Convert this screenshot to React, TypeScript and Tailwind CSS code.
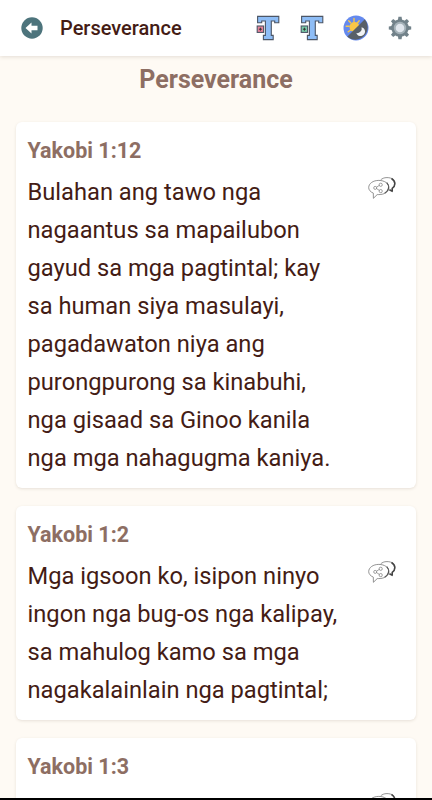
const verses = [
  {
    reference: "Yakobi 1:12",
    lines: [
      "Bulahan ang tawo nga",
      "nagaantus sa mapailubon",
      "gayud sa mga pagtintal; kay",
      "sa human siya masulayi,",
      "pagadawaton niya ang",
      "purongpurong sa kinabuhi,",
      "nga gisaad sa Ginoo kanila",
      "nga mga nahagugma kaniya.",
    ],
  },
  {
    reference: "Yakobi 1:2",
    lines: [
      "Mga igsoon ko, isipon ninyo",
      "ingon nga bug-os nga kalipay,",
      "sa mahulog kamo sa mga",
      "nagakalainlain nga pagtintal;",
    ],
  },
  { reference: "Yakobi 1:3", lines: [] },
];

function BackIcon() {
  return (
    <svg viewBox="0 0 22 22" className="h-[22px] w-[22px]">
      <circle cx="11" cy="11" r="10.7" fill="#4d747c" />
      <path d="M4.5 11l6-5.6v3.3h6v4.6h-6v3.3z" fill="#fff" />
    </svg>
  );
}

function FontSizeIcon({ color }: { color: string }) {
  return (
    <svg viewBox="0 0 24 26" className="h-[26px] w-6" stroke="#4c5666" strokeWidth="1.1">
      <path
        d="M1.6 1.4h21.2v6.4h-4.1V6h-3.4v14.4h1.9v4.2H7.4v-4.2h2V6H5.7v1.8H1.6z"
        fill="#8ebdf6"
      />
      <rect x="1.2" y="11" width="6.4" height="6.4" fill={color} />
      <path d="M4.4 12.7v3M2.9 14.2h3" stroke="#333" strokeWidth="1" />
    </svg>
  );
}

function ThemeIcon() {
  return (
    <svg viewBox="0 0 26 26" className="h-[26px] w-[26px]">
      <circle cx="13" cy="13" r="12.5" fill="#6489ee" />
      <path
        d="M11 3.5v3M5.7 5.8l2 2M3.2 11.2h3M16.2 5.8l-1.7 2M5.2 16.8l2.2-1.6"
        stroke="#f4c64d"
        strokeWidth="1.4"
        strokeLinecap="round"
      />
      <circle cx="11.5" cy="12" r="5" fill="#fac746" />
      <path d="M21.8 4.2A12.5 12.5 0 0 1 4.2 21.8z" fill="#596068" />
      <path d="M18.6 12.2a4.5 4.5 0 1 1-5.3 5.9 4.8 4.8 0 0 0 5.3-5.9z" fill="#f1f3f5" />
    </svg>
  );
}

function SettingsIcon() {
  const teeth = [0, 45, 90, 135, 180, 225, 270, 315];
  return (
    <svg viewBox="0 0 24 24" className="h-6 w-6">
      <g fill="#72828a">
        {teeth.map((angle) => (
          <path key={angle} d="M9.8 5L10.4.8h3.2l.6 4.2z" transform={`rotate(${angle} 12 12)`} />
        ))}
        <circle cx="12" cy="12" r="8.7" />
      </g>
      <circle cx="12" cy="12" r="6.2" fill="#a4b1b8" />
      <circle cx="12" cy="12" r="4.3" fill="#e0e6ed" />
    </svg>
  );
}

function ShareIcon() {
  return (
    <svg viewBox="0 0 28 24" className="h-6 w-7" fill="none" strokeLinejoin="round">
      <path
        d="M12.5 4.2C14 2.5 16 1.6 19 1.6c5 0 8 2.4 8 6 0 2.1-1 3.8-2.7 5l.1 3.2-3.2-1.8"
        stroke="#777"
        strokeWidth=".8"
      />
      <path
        d="M23.5 2.5c4.3 2.7 4.2 7.2.7 9.8l.1 2.8-2.8-1.3"
        stroke="#444"
        strokeWidth="1.5"
      />
      <path
        d="M10.8 4.4c5.7 0 10.2 3.1 10.2 7.2s-4.5 7-10.2 7H9.2l-3.8 3.7-.1-5.2C2.4 15.9.7 13.9.7 11.6c0-4.1 4.4-7.2 10.1-7.2z"
        fill="#fff"
        stroke="#777"
        strokeWidth=".8"
      />
      <path d="M18.8 6.6c3.2 3.6 2 8.4-2.2 10.6" stroke="#555" strokeWidth="1.2" />
      <g stroke="#777" strokeWidth=".7">
        <path d="M8.5 11.2l2.8-1.8M8.5 12.5l2.8 1.9" />
        <circle cx="7.2" cy="11.9" r="1.5" />
        <circle cx="12.7" cy="8.8" r="1.6" />
        <circle cx="12.7" cy="15.1" r="1.6" />
      </g>
    </svg>
  );
}

export default function App() {
  return (
    <div className="flex h-[800px] w-[432px] flex-col overflow-hidden border-b-2 border-black bg-[#fefaf4] font-['Roboto',sans-serif] text-[#441c15]">
      <header className="relative z-10 flex h-14 shrink-0 items-center bg-white pr-5 pl-[21px] shadow-[0_1px_4px_rgba(90,70,50,0.16)]">
        <button type="button" aria-label="Back">
          <BackIcon />
        </button>
        <h1 className="ml-[17px] text-[20px] leading-6 font-medium">Perseverance</h1>
        <div className="ml-auto flex items-center gap-5">
          <button type="button" aria-label="Decrease text size">
            <FontSizeIcon color="#e7839b" />
          </button>
          <button type="button" aria-label="Increase text size">
            <FontSizeIcon color="#79cca9" />
          </button>
          <button type="button" aria-label="Toggle theme" className="-ml-px">
            <ThemeIcon />
          </button>
          <button type="button" aria-label="Settings" className="-ml-px">
            <SettingsIcon />
          </button>
        </div>
      </header>

      <main className="flex min-h-0 flex-1 flex-col px-4">
        <h2 className="mt-2 h-[58px] shrink-0 text-center text-[25px] leading-8 font-bold text-[#8d6e63]">
          Perseverance
        </h2>
        <div className="flex flex-col gap-[18px]">
          {verses.map((verse) => (
            <article
              key={verse.reference}
              className="shrink-0 rounded-md bg-white px-[11.5px] pb-[11px] shadow-[0_1px_3px_rgba(90,70,50,0.14)]"
            >
              <h3 className="pt-[14.5px] text-[21.5px] leading-7 font-bold text-[#8d6e63]">
                {verse.reference}
              </h3>
              <div className="mt-[8.5px] flex items-start justify-between">
                <div className="text-[23.7px] leading-[38px] whitespace-nowrap">
                  {verse.lines.map((line) => (
                    <p key={line}>{line}</p>
                  ))}
                </div>
                <button type="button" aria-label="Share verse" className="mt-[3px] mr-[9px]">
                  <ShareIcon />
                </button>
              </div>
            </article>
          ))}
        </div>
      </main>
    </div>
  );
}
